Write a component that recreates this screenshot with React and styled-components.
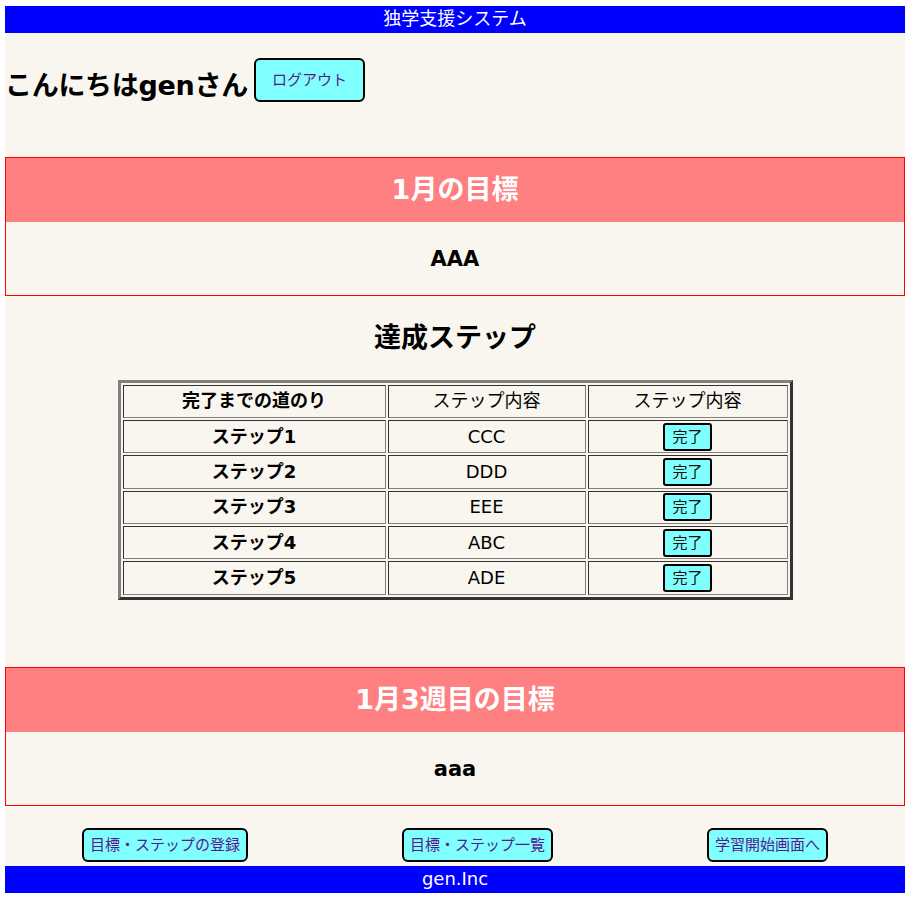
import React from "react";
import styled, { createGlobalStyle } from "styled-components";

const FONT = `"DejaVu Sans", "Noto Sans CJK JP", "Noto Sans", sans-serif`;

const GlobalStyle = createGlobalStyle`
  html, body {
    margin: 0;
    padding: 0;
    background: #ffffff;
  }
  body {
    font-family: ${FONT};
    font-size: 18px;
    color: #000;
  }
`;

const Page = styled.div`
  width: 900px;
  margin: 6px 0 0 5px;
  background: #f9f6ef;
  display: flex;
  flex-direction: column;
`;

const Bar = styled.div`
  height: 27px;
  line-height: 26px;
  background: #0000ff;
  color: #ffffff;
  text-align: center;
  font-size: 18px;
`;

const GreetingRow = styled.div`
  display: flex;
  align-items: flex-start;
  gap: 6px;
  margin: 25px 0 0 0;
`;

const Greeting = styled.h2`
  margin: 8px 0 0 0;
  font-size: 27px;
  font-weight: bold;
  line-height: 39px;
  letter-spacing: -0.3px;
`;

const CyanButton = styled.button`
  font-family: ${FONT};
  font-size: 15px;
  line-height: 22px;
  background: #80ffff;
  color: ${(p) => (p.$dark ? "#111" : "#551a8b")};
  border: 2px solid #000;
  border-radius: ${(p) => p.$radius || "6px"};
  padding: ${(p) => p.$pad || "4px 6px"};
  cursor: pointer;
  white-space: nowrap;
`;

const GoalBox = styled.section`
  border: 1px solid #ff0000;
  margin-top: ${(p) => p.$top};
  display: flex;
  flex-direction: column;
`;

const GoalHead = styled.h2`
  margin: 0;
  height: 64px;
  padding-bottom: 1px;
  box-sizing: border-box;
  background: #ff8080;
  color: #ffffff;
  font-size: 27px;
  line-height: 39px;
  font-weight: bold;
  display: flex;
  align-items: center;
  justify-content: center;
`;

const GoalBody = styled.h3`
  margin: 0;
  height: 73px;
  padding-top: 1px;
  box-sizing: border-box;
  font-size: 21px;
  line-height: 30px;
  font-weight: bold;
  display: flex;
  align-items: center;
  justify-content: center;
`;

const SectionTitle = styled.h2`
  margin: 22px 0 0 0;
  font-size: 27px;
  font-weight: bold;
  line-height: 39px;
  text-align: center;
`;

const StepTable = styled.table`
  margin: 23px auto 0;
  border-collapse: separate;
  border-spacing: 2px;
  border-style: solid;
  border-width: 3px;
  border-color: #808080 #333333 #333333 #808080;
  font-size: 18px;
`;

const Cell = styled.td`
  height: 31.4px;
  padding: 0 1px;
  text-align: center;
  vertical-align: middle;
  border-style: solid;
  border-width: 1px;
  border-color: #333333 #808080 #808080 #333333;
  font-weight: ${(p) => (p.$bold ? "bold" : "normal")};
  width: ${(p) => p.$w || "auto"};
  line-height: 24px;
`;

const NavRow = styled.div`
  display: flex;
  justify-content: space-around;
  align-items: center;
  margin: 22px 0 4px;
`;

const steps = [
  { name: "ステップ1", content: "CCC" },
  { name: "ステップ2", content: "DDD" },
  { name: "ステップ3", content: "EEE" },
  { name: "ステップ4", content: "ABC" },
  { name: "ステップ5", content: "ADE" },
];

export default function App() {
  return (
    <>
      <GlobalStyle />
      <Page>
        <Bar>独学支援システム</Bar>
        <GreetingRow>
          <Greeting>こんにちはgenさん</Greeting>
          <CyanButton $pad="9px 16px">ログアウト</CyanButton>
        </GreetingRow>

        <GoalBox $top="51.5px">
          <GoalHead>1月の目標</GoalHead>
          <GoalBody>AAA</GoalBody>
        </GoalBox>

        <SectionTitle>達成ステップ</SectionTitle>
        <StepTable>
          <tbody>
            <tr>
              <Cell as="th" $bold $w="259px">完了までの道のり</Cell>
              <Cell as="th" $w="194px">ステップ内容</Cell>
              <Cell as="th" $w="196px">ステップ内容</Cell>
            </tr>
            {steps.map((s) => (
              <tr key={s.name}>
                <Cell $bold>{s.name}</Cell>
                <Cell>{s.content}</Cell>
                <Cell>
                  <CyanButton $dark $radius="3px" $pad="1px 7px">
                    完了
                  </CyanButton>
                </Cell>
              </tr>
            ))}
          </tbody>
        </StepTable>

        <GoalBox $top="67px">
          <GoalHead>1月3週目の目標</GoalHead>
          <GoalBody>aaa</GoalBody>
        </GoalBox>

        <NavRow>
          <CyanButton>目標・ステップの登録</CyanButton>
          <CyanButton>目標・ステップ一覧</CyanButton>
          <CyanButton>学習開始画面へ</CyanButton>
        </NavRow>
        <Bar>gen.Inc</Bar>
      </Page>
    </>
  );
}
